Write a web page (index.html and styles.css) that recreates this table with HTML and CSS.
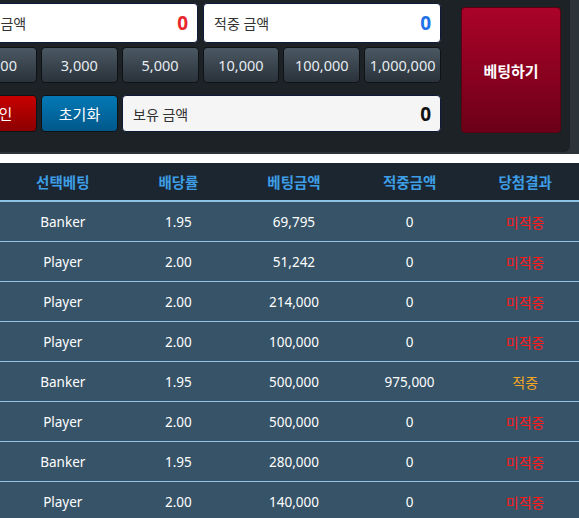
FILE: index.html
```html
<!DOCTYPE html>
<html lang="ko">
<head>
<meta charset="utf-8">
<link rel="stylesheet" href="styles.css">
</head>
<body>
<div class="top-wrap">
  <div class="panel">
    <div class="controls">
      <div class="row-inputs">
        <div class="field"><span class="label">베팅 금액</span><span class="val red">0</span></div>
        <div class="field"><span class="label">적중 금액</span><span class="val blue">0</span></div>
      </div>
      <div class="row-chips">
        <button class="chip">1,000</button>
        <button class="chip">3,000</button>
        <button class="chip">5,000</button>
        <button class="chip">10,000</button>
        <button class="chip">100,000</button>
        <button class="chip">1,000,000</button>
      </div>
      <div class="row-actions">
        <button class="act act-red">확인</button>
        <button class="act act-blue">초기화</button>
        <div class="field field-gray"><span class="label">보유 금액</span><span class="val dark">0</span></div>
      </div>
    </div>
    <button class="bet">베팅하기</button>
  </div>
</div>
<table class="hist">
  <colgroup>
    <col class="c-first"><col class="c"><col class="c"><col class="c"><col class="c">
  </colgroup>
  <thead>
    <tr><th>선택베팅</th><th>배당률</th><th>베팅금액</th><th>적중금액</th><th>당첨결과</th></tr>
  </thead>
  <tbody>
    <tr><td>Banker</td><td>1.95</td><td>69,795</td><td>0</td><td class="lose">미적중</td></tr>
    <tr><td>Player</td><td>2.00</td><td>51,242</td><td>0</td><td class="lose">미적중</td></tr>
    <tr><td>Player</td><td>2.00</td><td>214,000</td><td>0</td><td class="lose">미적중</td></tr>
    <tr><td>Player</td><td>2.00</td><td>100,000</td><td>0</td><td class="lose">미적중</td></tr>
    <tr><td>Banker</td><td>1.95</td><td>500,000</td><td>975,000</td><td class="win">적중</td></tr>
    <tr><td>Player</td><td>2.00</td><td>500,000</td><td>0</td><td class="lose">미적중</td></tr>
    <tr><td>Banker</td><td>1.95</td><td>280,000</td><td>0</td><td class="lose">미적중</td></tr>
    <tr><td>Player</td><td>2.00</td><td>140,000</td><td>0</td><td class="lose">미적중</td></tr>
  </tbody>
</table>
</body>
</html>
```

FILE: styles.css
```css
html, body {
  margin: 0;
  padding: 0;
  background: #ffffff;
  overflow: hidden;
  width: 579px;
  height: 518px;
  font-family: "Noto Sans", "Noto Sans CJK KR", sans-serif;
}

.top-wrap {
  background: #2d3439;
  height: 154px;
  width: 579px;
}

.panel {
  width: 570px;
  height: 152px;
  background: #1d2226;
  border-bottom-right-radius: 6px;
  display: flex;
  align-items: flex-start;
}

.controls {
  margin-left: -40px;
  width: 481px;
  flex: none;
  padding-top: 3px;
  display: flex;
  flex-direction: column;
}

.row-inputs {
  display: grid;
  grid-template-columns: 1fr 1fr;
  gap: 5px;
  height: 40px;
}

.field {
  box-sizing: border-box;
  background: #ffffff;
  border: 1px solid #0d1a3a;
  border-radius: 4px;
  display: flex;
  align-items: center;
  justify-content: space-between;
  padding: 0 9px 0 10px;
}

.field-gray {
  background: #f5f5f5;
}

.label {
  font-size: 14px;
  color: #333333;
}

.val {
  font-size: 19px;
  font-weight: bold;
}

.red { color: #e8262b; }
.blue { color: #1e73e8; }
.dark { color: #111111; }

.row-chips {
  margin-top: 4px;
  display: grid;
  grid-template-columns: repeat(6, 1fr);
  gap: 4px;
  height: 36px;
}

.chip {
  box-sizing: border-box;
  border: 1px solid #101316;
  border-radius: 4px;
  background: linear-gradient(#4b5863, #2a323a);
  color: #e6ecf1;
  font-family: "Noto Sans", "Noto Sans CJK KR", sans-serif;
  font-size: 14.5px;
  padding: 0;
}

.row-actions {
  margin-top: 12px;
  display: grid;
  grid-template-columns: 77px 77px 1fr;
  gap: 4px;
  height: 37px;
}

.act {
  box-sizing: border-box;
  border: 1px solid #101316;
  border-radius: 4px;
  color: #ffffff;
  font-family: "Noto Sans", "Noto Sans CJK KR", sans-serif;
  font-size: 15px;
  padding: 0;
}

.act-red { background: linear-gradient(#c70000, #8c0000); }
.act-blue { background: linear-gradient(#0479b5, #00588a); }

.bet {
  margin-left: 20px;
  margin-top: 7px;
  width: 100px;
  height: 126px;
  box-sizing: border-box;
  border: 1px solid #5a0010;
  border-radius: 4px;
  background: linear-gradient(#ab0329, #6c0018);
  color: #ffffff;
  font-family: "Noto Sans", "Noto Sans CJK KR", sans-serif;
  font-size: 15px;
  font-weight: bold;
  padding: 0;
}

.hist {
  margin-top: 9px;
  width: 583px;
  border-collapse: collapse;
  table-layout: fixed;
}

.c-first { width: 120.5px; }
.c { width: 115.5px; }

.hist th {
  background: #1b2631;
  color: #3d9ee6;
  font-size: 14.5px;
  font-weight: bold;
  height: 37px;
  padding: 0;
  border-bottom: 2px solid #8cc3e6;
}

.hist td {
  background: #365367;
  color: #ffffff;
  font-size: 13.5px;
  height: 39px;
  padding: 0;
  text-align: center;
  border-bottom: 1px solid #8cc3e6;
}

.hist th:first-child,
.hist td:first-child {
  padding-left: 5px;
}

.hist td.lose { color: #ff1a1a; font-size: 14px; }
.hist td.win { color: #f5a623; font-size: 14px; }
```
